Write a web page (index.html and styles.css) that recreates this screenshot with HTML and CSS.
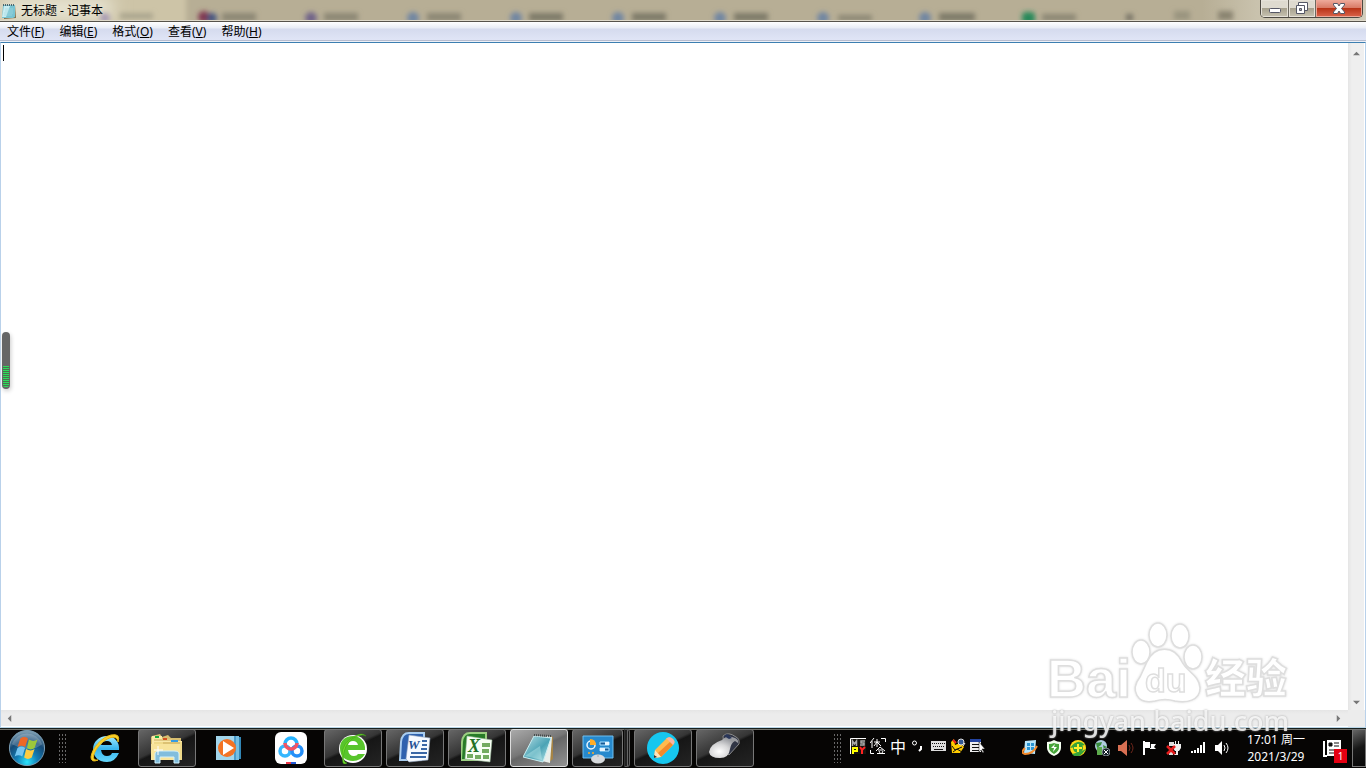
FILE: index.html
```html
<!DOCTYPE html>
<html lang="zh-CN">
<head>
<meta charset="utf-8">
<meta name="viewport" content="width=device-width, initial-scale=1">
<title>无标题 - 记事本</title>
<link rel="stylesheet" href="styles.css">
</head>
<body>
<main class="window">
  <header class="titlebar">
    <svg class="glass" aria-hidden="true">
      <defs>
        <filter id="soft" x="-50%" y="-50%" width="200%" height="200%"><feGaussianBlur stdDeviation="2.5"/></filter>
        <filter id="wide" x="-50%" y="-100%" width="200%" height="300%"><feGaussianBlur stdDeviation="9"/></filter>
      </defs>
      <rect x="-20" y="-10" width="206" height="50" fill="#cdc4a7" filter="url(#soft)"/>
      <rect x="0" y="-2" width="112" height="21" fill="#ebe8d8" filter="url(#wide)"/>
      <g filter="url(#soft)">
        <circle cx="105" cy="18" r="5" fill="#a89bb4"/><rect x="120" y="13" width="33" height="6" fill="#aaa58e"/>
        <circle cx="204" cy="17" r="6" fill="#803951"/><circle cx="212" cy="18" r="5" fill="#445581"/><rect x="222" y="13" width="34" height="8" fill="#8c8775"/>
        <circle cx="311" cy="18" r="6" fill="#716389"/><rect x="324" y="13" width="34" height="8" fill="#8c8775"/>
        <circle cx="413" cy="18" r="6" fill="#7186a2"/><rect x="427" y="13" width="34" height="8" fill="#8c8775"/>
        <circle cx="516" cy="18" r="6" fill="#7186a2"/><rect x="529" y="13" width="34" height="8" fill="#7e7a69"/>
        <circle cx="618" cy="18" r="6" fill="#7186a2"/><rect x="632" y="13" width="34" height="8" fill="#7e7a69"/>
        <circle cx="720" cy="18" r="6" fill="#7186a2"/><rect x="734" y="13" width="34" height="8" fill="#7e7a69"/>
        <circle cx="823" cy="18" r="6" fill="#7186a2"/><rect x="838" y="15" width="34" height="6" fill="#8c8775"/>
        <circle cx="925" cy="18" r="6" fill="#7186a2"/><rect x="939" y="13" width="36" height="8" fill="#7e7a69"/>
        <rect x="1022" y="12" width="13" height="12" rx="4" fill="#27895a"/><rect x="1042" y="14" width="34" height="7" fill="#8c8775"/>
        <rect x="1126" y="14" width="7" height="7" fill="#777266"/>
        <rect x="1174" y="11" width="16" height="9" fill="#9a947f"/>
        <rect x="1218" y="11" width="15" height="9" fill="#89836f"/>
      </g>
    </svg>
    <svg class="app-icon" viewBox="0 0 16 16" aria-hidden="true">
      <path d="M3 2h11l1 13-12 1z" fill="#806f4a"/>
      <path d="M2 2h12v12l-2 1H1z" fill="#78c4d2"/>
      <path d="M3 3h6L5 14H1z" fill="#c9edf1"/>
      <path d="M2 2h12" stroke="#4c666e" stroke-dasharray="1 1" stroke-width="2"/>
      <path d="M4 6h8M4 8h8M3 10h9M3 12h8" stroke="#a4dae1" stroke-width=".7"/>
    </svg>
    <h1 class="caption">无标题 - 记事本</h1>
    <div class="controls">
      <button class="control minimize" aria-label="最小化"><svg viewBox="0 0 14 14"><rect x="1.500" y="6.500" width="11" height="4" rx="1" fill="#fff" stroke="#555766"/></svg></button>
      <button class="control restore" aria-label="还原"><svg viewBox="0 0 14 14"><path d="M3.500 .5h9v8h-9z" fill="#fff" stroke="#555766"/><path d="M1.500 3.500h8v8h-8z" fill="#fff" stroke="#555766"/><path d="M4.500 6.500h2v2h-2z" fill="#aaa" stroke="#555766"/></svg></button>
      <button class="control close" aria-label="关闭"><svg viewBox="0 0 14 14"><path d="M1.500 1.500h4L7 4l1.500-2.500h4v1.500L9.500 6.500 12.500 10v1.500h-4L7 9l-1.500 2.500h-4V10l3-3.500-3-3.500z" fill="#fff" stroke="#555766"/></svg></button>
    </div>
  </header>
  <nav class="menubar">
    <button>文件(<u>F</u>)</button><button>编辑(<u>E</u>)</button><button>格式(<u>O</u>)</button><button>查看(<u>V</u>)</button><button>帮助(<u>H</u>)</button>
  </nav>
  <section class="editor">
    <textarea class="document" aria-label="文本编辑区" spellcheck="false"></textarea>
    <div class="caret"></div>
    <div class="scroll vertical">
      <button aria-label="向上滚动"><svg viewBox="0 0 8 8"><path d="M0 6l4-4 4 4z" fill="#777"/></svg></button>
      <button aria-label="向下滚动"><svg viewBox="0 0 8 8"><path d="M0 2l4 4 4-4z" fill="#777"/></svg></button>
    </div>
    <div class="scroll horizontal">
      <button aria-label="向左滚动"><svg viewBox="0 0 8 8"><path d="M6 0v8L2 4z" fill="#777"/></svg></button>
      <button aria-label="向右滚动"><svg viewBox="0 0 8 8"><path d="M2 0v8l4-4z" fill="#777"/></svg></button>
    </div>
  </section>
  <div class="level"><div class="level-bars"></div></div>
</main>

<footer class="taskbar">
  <button class="start" aria-label="开始">
    <svg viewBox="0 0 40 40">
      <defs><radialGradient id="orb" cx=".5" cy=".9" r=".85"><stop offset="0" stop-color="#2ce4fc"/><stop offset=".35" stop-color="#137fb7"/><stop offset=".7" stop-color="#164a76"/><stop offset="1" stop-color="#7899ae"/></radialGradient></defs>
      <circle cx="20" cy="20" r="18.500" fill="url(#orb)" stroke="#7da2b9"/>
      <path d="M4 16a17 17 0 0 1 32 0q-8 6-16 5T4 16z" fill="#fff" opacity=".2"/>
      <path d="M13 10q4-3 8 0l-3 9q-4-3-8 0z" fill="#ed6727"/>
      <path d="M22 11q5 3 9 0l-3 9q-4 3-8 0z" fill="#9dc83b"/>
      <path d="M10 20q4-3 8 0l-3 9q-4-3-8 0z" fill="#75c5f1"/>
      <path d="M19 21q5 3 9 0l-3 9q-4 3-8 0z" fill="#fdcc42"/>
    </svg>
  </button>
  <div class="grip"></div>
  <nav class="apps" aria-label="任务栏">
    <button class="app" aria-label="Internet Explorer"><svg viewBox="0 0 32 32">
      <defs><linearGradient id="ie" x2="0" y2="1"><stop stop-color="#a4edff"/><stop offset=".5" stop-color="#37b4ed"/><stop offset="1" stop-color="#65d6fb"/></linearGradient></defs>
      <path d="M30 18H12q1 6 6 6 4 0 5-3h7q-4 9-12 9C9 30 4 24 4 17S10 4 18 4s13 7 12 14zM12 13h11q-1-4-5-4-5 0-6 4z" fill="url(#ie)"/>
      <path d="M29 10q3-9-7-7C13 5 3 16 2 25q0 6 7 3C3 29 3 23 9 15 16 6 28 1 29 10z" fill="#fad22b" stroke="#e8b915"/>
    </svg></button>
    <button class="app open" aria-label="文件资源管理器"><svg viewBox="0 0 32 32">
      <path d="M1 4l8-2 2 3 6-2 3 3h10v5h1v17H0V5z" fill="#d7be70"/>
      <path d="M1 4h10v3h10v2h10v18H1z" fill="#fae9a8"/><path d="M3 10h28v18H3z" fill="#efda8a"/><path d="M0 12h29v16H0z" fill="#f8e49b"/>
      <path d="M3 8h18M12 11h17" stroke="#caaa5d"/>
      <path d="M4 4h4v2H4z" fill="#15ac3d"/><path d="M12 6h4v2h-4z" fill="#d75220"/><path d="M20 8h7v2h-7z" fill="#369ce3"/>
      <path d="M4 31v-9q0-3 5-3h14q5 0 5 3v9h-5v-6H9v6z" fill="#81bddd" stroke="#d1f0fa"/>
      <path d="M7 14v9M3 18h9" stroke="#fff"/>
    </svg></button>
    <button class="app" aria-label="媒体播放器"><svg viewBox="0 0 32 32">
      <path d="M11 5h17v22H11z" fill="#3287b6"/><path d="M9 4h17v24H9z" fill="#75bee1"/><path d="M7 4h16v24H7z" fill="#4a9ccc"/><path d="M3 4h18v24H3z" fill="#a2d6ec"/>
      <circle cx="14" cy="16" r="9" fill="#f37324"/><path d="M10 9l11 7-11 7z" fill="#fff"/>
    </svg></button>
    <button class="app" aria-label="百度网盘"><svg viewBox="0 0 32 32">
      <rect width="32" height="32" rx="6" fill="#fff"/><g fill="none" stroke-width="3.500"><circle cx="10" cy="19" r="5" stroke="#35b7fe"/><circle cx="22" cy="19" r="5" stroke="#258ff8"/><path d="M10 12a6 6 0 1 1 12 0" stroke="#26b4ff"/><path d="M10 11a6 6 0 0 0 12 0" stroke="#f15464"/></g><path d="M11 30h5v2h-5z" fill="#ee3648"/><path d="M16 30h5v2h-5z" fill="#245bd6"/>
    </svg></button>
    <button class="app open" aria-label="360浏览器"><svg viewBox="0 0 32 32">
      <circle cx="16" cy="17" r="14" fill="#fff"/><path d="M28 18H11q1 6 6 6 3 0 4-2h7q-4 7-12 7C8 29 3 24 3 16S9 4 16 4s13 6 12 14zm-17-5h10q-1-4-5-4-4 0-5 4z" fill="#58c52c"/>
      <path d="M29 4Q25 0 18 4 5 10 5 24l1 7q2 2 4 0-5-1-3-11Q10 7 21 4q5-2 8 0z" fill="#72dc2c" stroke="#389e13" stroke-width=".5"/>
    </svg></button>
    <button class="app open" aria-label="Word"><svg viewBox="0 0 32 32">
      <path d="M2 10Q3 1 10 1h15v23l-3 4H1z" fill="#2f62ae" stroke="#a9cdef" stroke-width="2"/><path d="M10 3l21 3-2 22-19 2-3-3z" fill="#f6faff" stroke="#8c9fba" stroke-width=".6"/>
      <path d="M23 9h5M23 13h5M22 17h6M12 21h16M11 25h16" stroke="#3a67a6" stroke-width="2"/><text x="9" y="17" class="word-letter">W</text>
    </svg></button>
    <button class="app open" aria-label="Excel"><svg viewBox="0 0 32 32">
      <path d="M1 10Q2 1 9 1h16v23l-3 4H0z" fill="#287c28" stroke="#9ccf82" stroke-width="2"/><path d="M6 4l25 4-2 22-25-3z" fill="#f8fff5" stroke="#9ab99a" stroke-width=".6"/>
      <path d="M21 11h8v4h-8zM21 17h7v4h-7zM6 22h6v4H6zM14 23h6v4h-6zM22 23h6v4h-6z" fill="#74ac61"/><text x="7" y="20" class="excel-letter">X</text>
    </svg></button>
    <button class="app open active" aria-label="记事本"><svg viewBox="0 0 32 32">
      <defs><linearGradient id="paper" x2="1" y2="1"><stop stop-color="#b9dfe5"/><stop offset=".55" stop-color="#4ba3b5"/><stop offset="1" stop-color="#c4ecee"/></linearGradient></defs>
      <path d="M27 4l3 1v22l-5 4z" fill="#a78546"/><path d="M24 4l5 1-2 26-8-2z" fill="#e9eeea"/><path d="M11 4l17 2-8 24L0 25z" fill="url(#paper)" stroke="#c8ecf0"/><path d="M11 3l17 1" stroke="#454b4c" stroke-width="2" stroke-dasharray="1 1"/><path d="M2 24L17 14l2 14z" fill="#c6eff0" opacity=".4"/>
    </svg></button>
    <div class="stack"><button class="app open stacked" aria-label="控制面板"><svg viewBox="0 0 32 32">
      <path d="M1 4h30v22H1z" fill="#2689cd" stroke="#6fbff0"/><circle cx="9" cy="13" r="4" fill="#2689cd" stroke="#e7f6ff" stroke-width="1.500"/><path d="M8 7q6 0 6 6H8z" fill="#ffad26"/><path d="M18 10h9v3h-9zM18 16h9v3h-9z" fill="#185b96" stroke="#ade3ff"/><path d="M23 10h4v3h-4zM18 16h5v3h-5z" fill="#e7f6ff"/><circle cx="7" cy="21" r="1" fill="#ffad26"/><circle cx="11" cy="21" r="1" fill="#ffad26"/><ellipse cx="16" cy="27" rx="7" ry="4.500" fill="#d7dadd"/><path d="M16 22v3" stroke="#aaa"/>
    </svg></button><i></i></div>
    <button class="app open" aria-label="笔记"><svg viewBox="0 0 32 32">
      <circle cx="16" cy="16" r="16" fill="#16c7ef"/><path d="M8 18L20 6q3-2 6 1 3 3 0 6L14 25l-7 1z" fill="#ffba4e"/><path d="M11 21L24 9l2 4-12 12z" fill="#f18a2b"/><path d="M20 6q3-2 6 1 3 3 0 6l-7-7z" fill="#f7b5a4"/><path d="M8 18l6 7-7 1z" fill="#ffe4bd"/><path d="M7 23l3 2-3 1z" fill="#333"/>
    </svg></button>
    <button class="app open" aria-label="鼠标"><svg viewBox="0 0 32 32">
      <defs><radialGradient id="mouse" cx=".35" cy=".7" r=".65"><stop stop-color="#fff"/><stop offset=".5" stop-color="#d8d8d9"/><stop offset="1" stop-color="#999ba0"/></radialGradient></defs>
      <path d="M14 4q5-5 13 1 4 2 3 7L20 23l-5-4z" fill="#303545" stroke="#888"/><path d="M13 8q5-6 13-2 4 2 3 5l-3-2q-4 2-5 8-1 9-10 9Q1 26 0 20q1-8 13-12z" fill="url(#mouse)"/><path d="M15 4l3-2 5 4-3 1z" fill="#29365a"/>
    </svg></button>
  </nav>
  <div class="grip language-grip"></div>
  <div class="icons language" aria-label="输入法">
    <svg viewBox="0 0 16 16"><path d="M0 0h16v16H0z" fill="#16140f"/><path d="M.5 16V.5H16" fill="none" stroke="#fff"/><path d="M2.500 8V3l2 3 2-3v5M15 3h-4v2h3v2h-4" fill="none" stroke="#aaa" stroke-width="1.500"/><path d="M3 16v-6h4v3H3" fill="none" stroke="#ff0" stroke-width="2"/><path d="M10 9l2 3 3-3m-3 3v4" fill="none" stroke="#f22" stroke-width="2"/></svg>
    <svg viewBox="0 0 16 16" fill="none" stroke="#fff"><path d="M4 0L0 5m2-2v7m2-6h6M7 1v8M7 4L4 8m3-4l4 4M.5 12v3.500H4M11 .5h4.500V4M10 9L6 13m4-4l5 4M8 12h5M7 15.500h8M9 13l1 2m3-2l-1 2"/></svg>
    <span class="ime">中</span>
    <svg viewBox="0 0 16 16" fill="none" stroke="#fff"><circle cx="4.500" cy="5" r="2"/><path d="M11 8v3l-2 2" stroke-width="2"/></svg>
    <svg viewBox="0 0 16 16"><path d="M1 3h15v10H1z" fill="#ddd"/><path d="M2 5.500h13M3 8.500h12" stroke="#111" stroke-dasharray="1 1"/><path d="M4 11.500h9" stroke="#111"/></svg>
    <svg viewBox="0 0 16 16"><path d="M1 4l3-3 1 6 5-2 4 4-4 6H2z" fill="#fc0"/><circle cx="11" cy="4" r="3" fill="#345994" stroke="#ddd"/><path d="M2 8l3 4 7-3M3 14l4-3 5 3" fill="none" stroke="#111"/><path d="M3 2l3 3" stroke="#e22" stroke-width="2"/><path d="M13 8l2-3" stroke="#fff"/></svg>
    <svg viewBox="0 0 16 16"><path d="M0 1h11v13H0z" fill="#eee"/><path d="M0 1h11v3H0z" fill="#2344a2"/><path d="M2 6.500h7M2 9.500h7M2 12.500h7" stroke="#111"/><path d="M9 4v10l2-2 2 3 1-1-2-3h3z" fill="#fff" stroke="#111" stroke-width=".5"/></svg>
  </div>
  <div class="icons tray" aria-label="通知区域">
    <svg viewBox="0 0 16 16"><path d="M3 1l11-1-1 14-11-1z" fill="#b7e5fa"/><path d="M5 3h3v3H5zM9 3h3v3H9zM5 7h3v3H5zM9 7h3v3H9z" fill="#2994d3"/><path d="M3 8q-5 5 0 6 8 0 12-8" fill="none" stroke="#f58b2d" stroke-width="2"/></svg>
    <svg viewBox="0 0 16 16"><path d="M1 2q4 0 7-2 3 2 7 2v6q0 5-7 8-7-3-7-8z" fill="#f4fff0"/><path d="M3 4q3 0 5-1 2 1 5 1v4q0 3-5 6-5-3-5-6z" fill="#46a539"/><path d="M9 4L5 8h3l-1 4 4-5H8z" fill="#fff"/></svg>
    <svg viewBox="0 0 16 16"><circle cx="8" cy="8" r="8" fill="#ffda17"/><path d="M0 8Q8-3 15 5 7 7 0 8zM16 9Q8 21 2 14 9 13 16 9z" fill="#37a43a"/><circle cx="8" cy="8" r="5" fill="#37a43a"/><path d="M8 4v8M4 8h8" stroke="#fff12e" stroke-width="2"/></svg>
    <svg viewBox="0 0 16 16"><circle cx="7" cy="6" r="6" fill="#afcde0"/><path d="M2 3l6-1-1 3-4 3zM9 5l4 2-3 3z" fill="#398d3e"/><path d="M3 7h5v8H3z" fill="#5daa4c"/><circle cx="12" cy="12" r="4" fill="#16212a" stroke="#b6c1c6" stroke-width=".7"/><path d="M10 10l4 4m0-4l-4 4" stroke="#fff"/></svg>
    <svg viewBox="0 0 16 16"><path d="M0 5h3l6-5v16l-6-5H0z" fill="#d97053"/><path d="M11 5q2 3 0 6M13 3q4 5 0 10" fill="none" stroke="#71271b"/></svg>
    <svg viewBox="0 0 16 16" fill="#fff"><path d="M1 1h2v14H1zM3 2h5v2h6l-2 3 2 2H8V8H3z"/><path d="M8.500 4v4" stroke="#222"/></svg>
    <svg viewBox="0 0 16 16"><path d="M3 2h5v4H3zM3 12h4v3H3z" fill="#ddd"/><path d="M7 4h8v4l-2 3H9L7 8zM9 1h1v3H9zM12 1h1v3h-1zM10 11h2v4H8v-1h2z" fill="#eee"/><path d="M1 6l8 8m0-8l-8 8" stroke="#e51c1c" stroke-width="2.500"/></svg>
    <svg viewBox="0 0 16 16" stroke="#fff" stroke-width="2"><path d="M2 13v-2M5 13v-3M8 13V8M11 13V5M14 13V2"/></svg>
    <svg viewBox="0 0 16 16"><path d="M1 5h3l4-4v14l-4-4H1z" fill="#fff"/><path d="M10 5q2 3 0 6M12 3q4 5 0 10" fill="none" stroke="#fff"/></svg>
  </div>
  <button class="clock"><time datetime="2021-03-29T17:01"><span>17:01 周一</span><span>2021/3/29</span></time></button>
  <button class="notifications" aria-label="1 条通知"><svg viewBox="0 0 18 18"><path d="M1 2v15h3" fill="none" stroke="#fff" stroke-width="2"/><path d="M4 1h14v16H4z" fill="#fff"/><path d="M6 4h3v3H6zM11 4h5M11 7h5M6 11h10M6 14h10" stroke="#111" fill="#111"/></svg><span class="badge">1</span></button>
  <button class="desktop" aria-label="显示桌面"></button>
</footer>

<svg class="watermark" viewBox="0 0 256 126" role="img" aria-label="Baidu 经验 jingyan.baidu.com">
  <g class="brand">
    <text x="2" y="82" class="brand-latin">Bai</text>
    <path d="M102 47C110 30 129 30 137 47C142 57 154 60 155 73C155 86 141 88 130 86Q120 83 110 86C92 90 85 75 95 62Z"/>
    <ellipse cx="96" cy="37" rx="9" ry="12"/><ellipse cx="113" cy="20" rx="9" ry="12"/><ellipse cx="135" cy="21" rx="9" ry="12"/><ellipse cx="148" cy="42" rx="9" ry="12"/>
    <text x="100" y="77" class="brand-du">du</text>
    <text x="160" y="78" class="brand-cjk">经验</text>
  </g>
  <text x="6" y="116" class="site">jingyan.baidu.com</text>
</svg>
</body>
</html>
```
FILE: styles.css
```css
* { box-sizing: border-box; }

body {
  margin: 0;
  height: 100vh;
  display: flex;
  flex-direction: column;
  overflow: hidden;
  position: relative;
  background: #fff;
  color: #000;
  font: 12px/16px "Noto Sans", "Noto Sans CJK SC", sans-serif;
}

button {
  margin: 0;
  padding: 0;
  border: 0;
  background: none;
  color: inherit;
  font: inherit;
}

svg { display: block; }

.window {
  flex: 1;
  min-height: 0;
  display: flex;
  flex-direction: column;
  position: relative;
  border-bottom: 1px solid #b9d6e8;
}

.titlebar {
  position: relative;
  height: 22px;
  display: flex;
  align-items: flex-start;
  padding-left: 1px;
  background: linear-gradient(90deg, #b7ae95 88%, #c9c2ad 92%, #d3cdbb);
  border-bottom: 1px solid #56534b;
  box-shadow: inset 0 -1px #ded9ca;
}
.glass {
  position: absolute;
  left: 0;
  top: 0;
  width: 100%;
  height: 20px;
}
.app-icon {
  position: relative;
  width: 16px;
  height: 16px;
  margin-top: 3px;
}
.caption {
  position: relative;
  flex: 1;
  margin: 3px 0 0 4px;
  font-size: 12px;
  font-weight: 400;
  line-height: 16px;
}
.controls {
  position: relative;
  display: flex;
  height: 18px;
  margin-right: 3px;
  border: 1px solid #4d4942;
  border-top: 0;
  border-radius: 0 0 5px 5px;
  overflow: hidden;
}
.control {
  width: 27px;
  display: grid;
  place-items: center;
  border-right: 1px solid #6d695f;
  background: linear-gradient(#dedacf 0 45%, #a7a18e 50%, #c8c3b2);
  box-shadow: inset 0 0 0 1px #e5e1d8;
}
.control svg { width: 14px; height: 14px; }
.minimize { width: 28px; }
.close {
  width: 46px;
  border: 0;
  background: linear-gradient(#eeaa9b, #d97b67 45%, #b93418 50%, #db654b);
  box-shadow: inset 0 0 0 1px #eda797;
}

.menubar {
  height: 20px;
  display: flex;
  gap: 15px;
  padding-left: 7px;
  background: linear-gradient(#fff, #e8ecf5 6px, #d5dbee 7px, #e0e5f6 18px);
  border-bottom: 1px solid #edf0f7;
  box-shadow: inset 0 -1px #b6bdd0;
}
.menubar button { line-height: 19px; }
.menubar u { text-underline-offset: 1px; }

.editor {
  flex: 1;
  min-height: 0;
  position: relative;
  display: grid;
  grid-template: 1fr 17px / 1fr 17px;
  background: #ececec;
  border: 1px solid #b9d1ea;
  border-top-color: #3c7fb1;
  border-bottom: 0;
}
.document {
  width: 100%;
  border: 0;
  outline: 0;
  resize: none;
  padding: 2px;
  background: #fff;
  font: 14px/16px "Noto Sans", "Noto Sans CJK SC", sans-serif;
}
.caret {
  position: absolute;
  left: 2px;
  top: 2px;
  width: 1px;
  height: 16px;
  background: #000;
}
.scroll {
  display: flex;
  justify-content: space-between;
  background: linear-gradient(90deg, #e5e5e5, #efefef 4px);
}
.vertical { flex-direction: column; border-right: 1px solid #fff; padding-top: 2px; }
.horizontal { background: linear-gradient(#e5e5e5, #ececec 4px); border-bottom: 1px solid #fff; padding-right: 2px; }
.scroll button {
  width: 16px;
  height: 16px;
  display: grid;
  place-items: center;
}
.scroll svg { width: 7px; height: 7px; }
.level {
  position: absolute;
  left: 2px;
  top: 332px;
  width: 8px;
  height: 57px;
  padding: 34px 1px 2px;
  border-radius: 4px;
  background: #666;
  box-shadow: 1px 2px 4px #ccc;
}
.level-bars {
  height: 100%;
  border-radius: 0 0 2px 2px;
  background: repeating-linear-gradient(#2cdd5c 0 1px, #4a704d 1px 2px);
}

.taskbar {
  height: 40px;
  display: flex;
  align-items: stretch;
  padding-bottom: 1px;
  background: #060504;
  border-top: 1px solid #18211f;
  box-shadow: inset 0 1px #77766e;
  color: #fff;
}
.start { width: 54px; display: grid; place-items: center; }
.start svg { width: 38px; height: 38px; }
.grip {
  width: 9px;
  margin: 4px 9px 4px 4px;
  background: radial-gradient(#686868 1px, transparent 1px) 0 0 / 3px 4px;
}
.apps { display: flex; gap: 4px; }
.app {
  width: 58px;
  display: grid;
  place-items: center;
  border: 1px solid transparent;
  border-radius: 3px;
}
.app svg { width: 32px; height: 32px; }
.open {
  border-color: #777;
  background: linear-gradient(155deg, #666, #353535 45%, #161616 50%, #242424);
}
.active {
  border-color: #ddd;
  background: linear-gradient(155deg, #aaa, #777 45%, #666 50%, #939393);
}
.stack { width: 58px; display: flex; gap: 1px; }
.stacked { width: 51px; }
.stack i {
  width: 6px;
  border: 1px solid #606060;
  border-left-color: #333;
  border-radius: 0 3px 3px 0;
  background: linear-gradient(90deg, #202020 2px, #666 2px 3px, #171717 3px);
}
.language-grip { margin: 4px 8px 4px auto; }
.icons { display: flex; align-items: center; }
.icons svg { width: 16px; height: 16px; }
.language { gap: 4px; padding-bottom: 4px; }
.ime {
  width: 16px;
  font: 16px/24px "Noto Sans CJK SC", sans-serif;
}
.tray { gap: 8px; margin-left: 36px; }
.clock { width: 60px; margin-left: 16px; line-height: 17px; }
.clock span { display: block; white-space: nowrap; }
.notifications {
  position: relative;
  width: 25px;
  margin-left: 17px;
  display: flex;
  align-items: center;
}
.notifications svg { width: 18px; height: 18px; }
.badge {
  position: absolute;
  right: 1px;
  bottom: 4px;
  width: 13px;
  height: 14px;
  background: #e50012;
  font-size: 10px;
  line-height: 14px;
}
.desktop {
  width: 14px;
  margin-left: 4px;
  border: 1px solid #777;
  background: linear-gradient(155deg, #666, #161616 50%, #080808);
}

.word-letter { font: italic 700 13px "Liberation Serif", serif; fill: #234f93; }
.excel-letter { font: italic 700 18px "Liberation Serif", serif; fill: #247225; }

.watermark {
  position: absolute;
  right: 65px;
  bottom: 27px;
  width: 256px;
  height: 126px;
  pointer-events: none;
}
.brand {
  fill: #fff;
  stroke: #dedede;
  stroke-width: 1.5px;
  filter: drop-shadow(0 0 1px #ddd);
}
.brand-latin { font: 700 54px "Liberation Sans", sans-serif; }
.brand-cjk { font: 900 41px "Noto Sans CJK SC", sans-serif; }
.brand-du { font: 700 34px "Liberation Sans", sans-serif; }
.site {
  font: 500 27px "Noto Sans", sans-serif;
  fill: #fff;
  fill-opacity: .8;
  filter: drop-shadow(0 0 1px #999);
}
```
